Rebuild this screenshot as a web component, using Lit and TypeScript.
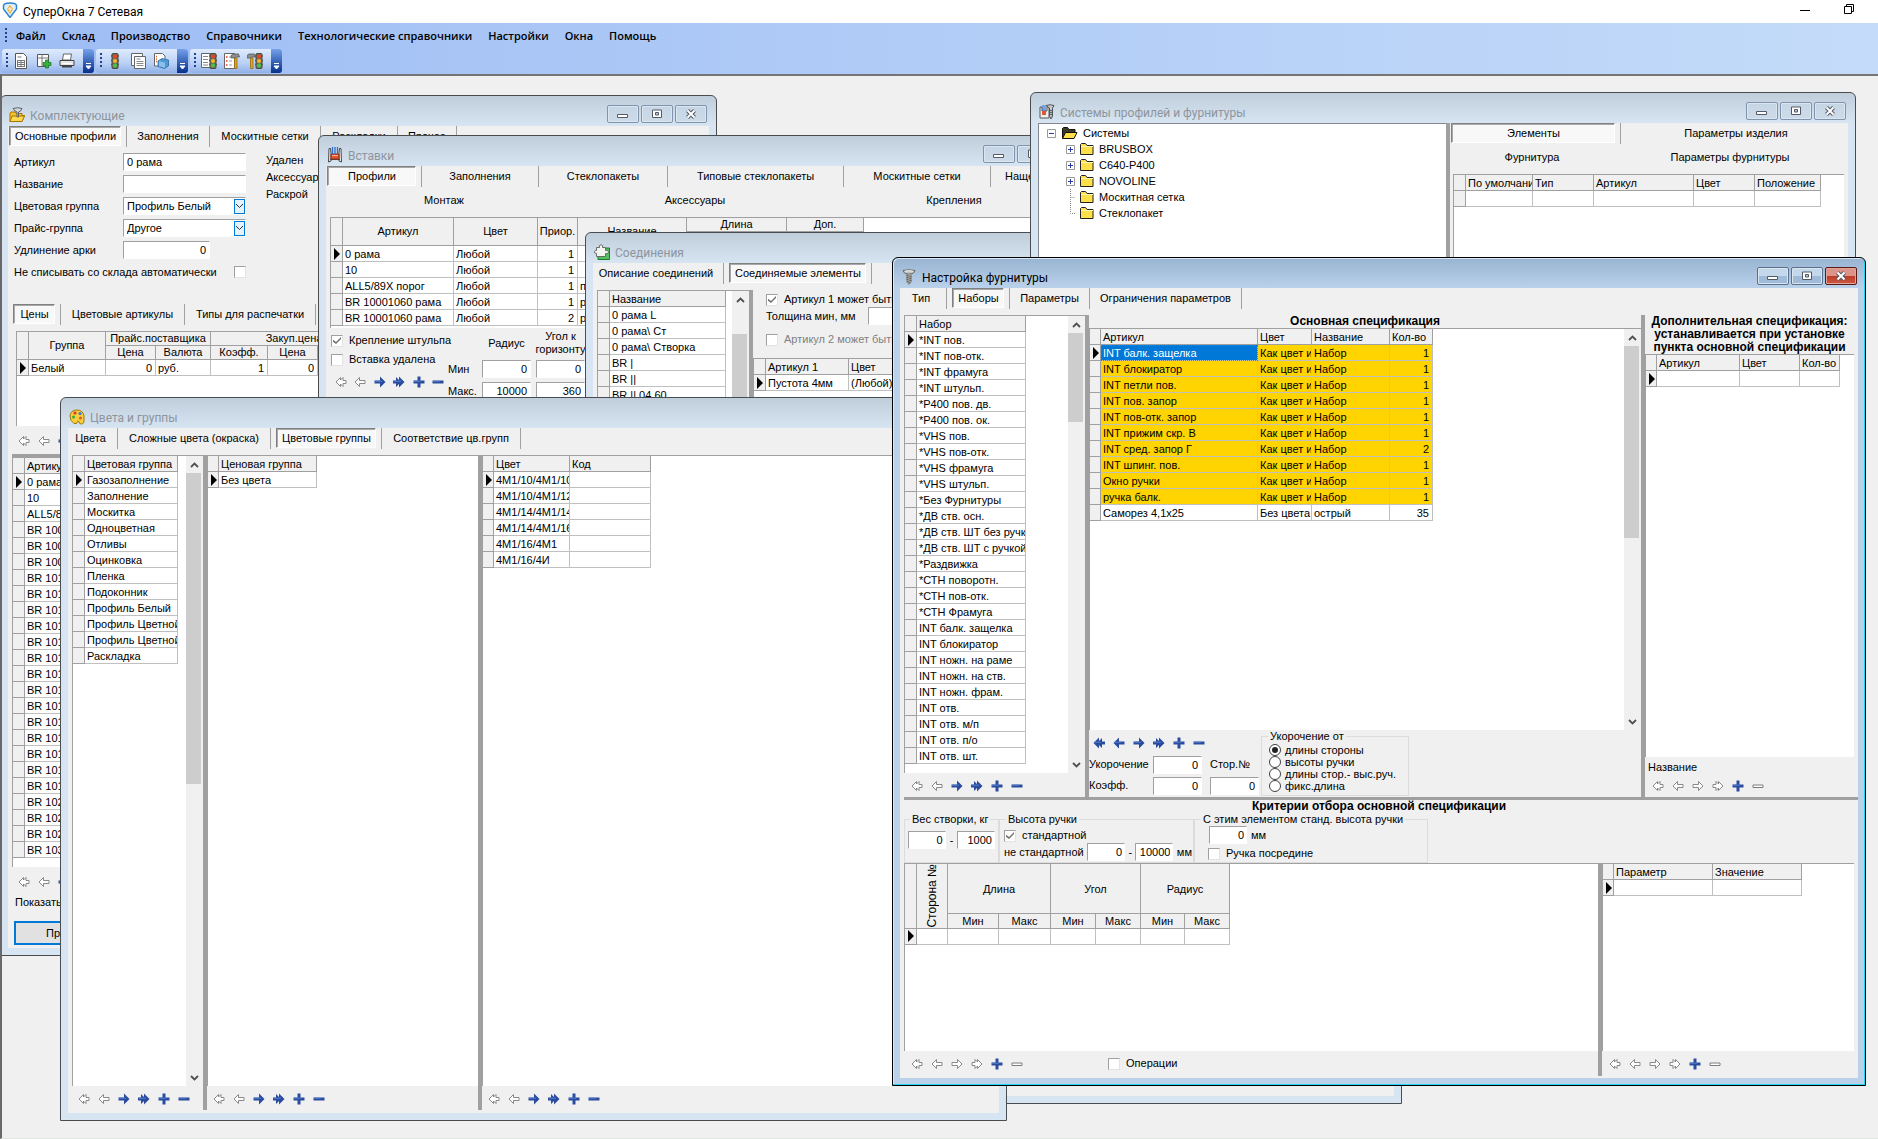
import { LitElement, html, svg, css, nothing } from "lit";
import type { TemplateResult } from "lit";
import { customElement } from "lit/decorators.js";
import { classMap } from "lit/directives/class-map.js";

type Cell = string | { t: string; cls?: string };
interface Column {
  w: number;
  t?: string;
  num?: boolean;
  center?: boolean;
}

/* ---------- glyphs ---------- */

const NAV: Record<string, string> = {
  first: "M5.5 1.5 1 6l4.500 4.500V8l2.500 2.500V7.500h3v-3H8v-3L5.500 4z",
  prev: "M5.500 1.500 1 6l4.500 4.500V7.500h5.500v-3H5.500z",
  next: "M6.500 1.500 11 6l-4.500 4.500V7.500H1v-3h5.500z",
  last: "M6.500 1.500 11 6l-4.500 4.500V8L4 10.500V7.500H1v-3h3v-3L6.500 4z",
  plus: "M4.500.5h3v4h4v3h-4v4h-3v-4h-4v-3h4z",
  minus: "M.5 4.500h11v3H.5z",
};
const NAV_SOLID: Record<string, string> = {
  ...NAV,
  first: "M6 .5.500 6 6 11.500V8l3 3V7.500h3v-3H9V1L6 4z",
  prev: "M6 .5.500 6 6 11.500v-4h5.500v-3H6z",
  next: "M6 .5 11.500 6 6 11.500v-4H.5v-3H6z",
  last: "M6 .5 11.500 6 6 11.500V8l-3 3V7.500H0v-3h3V1l3 3z",
};
const NAV_TITLES: Record<string, string> = {
  first: "Первая",
  prev: "Предыдущая",
  next: "Следующая",
  last: "Последняя",
  plus: "Добавить",
  minus: "Удалить",
};
const NAV_ORDER = ["first", "prev", "next", "last", "plus", "minus"];

/** Record navigator; `on` holds one flag per button, "1" = enabled. */
const navigator6 = (on: string) => html`
  <div class="nav">
    ${NAV_ORDER.map((k, i) => {
      const active = on[i] === "1";
      return html`<button class="navbtn" aria-label=${NAV_TITLES[k]} ?disabled=${!active}>
        <svg width="12" height="12" viewBox="0 0 12 12">
          ${active
            ? svg`<path d=${NAV_SOLID[k]} fill="#2b4c9e"/><path d="M1 5.200h7" stroke="#5580cf" stroke-width="1"/>`
            : k === "minus"
              ? svg`<path d="M1 5h10v2.500H1z" fill="#fff" stroke="#7d7d7d"/>`
              : svg`<path d=${NAV[k]} fill="#fff" stroke="#7d7d7d" stroke-width=".9"/>`}
        </svg>
      </button>`;
    })}
  </div>
`;

const pointer = svg`<path d="M0 0l5 5-5 5z" fill="#000"/>`;

const icons: Record<string, TemplateResult> = {
  app: html`<svg width="16" height="16" viewBox="0 0 16 16">
    <path d="M8 15.500 1.500 7V3.500Q2 1 8 1t6.500 2.500V7z" fill="#dff0fc" stroke="#2f86d0" stroke-width="1.500" />
    <path d="M8 3 11 7l-3 5L5 7z" fill="#f3a51c" /><path d="M8 5v5M6 7h4" stroke="#fff" />
  </svg>`,
  parts: html`<svg width="16" height="16" viewBox="0 0 16 16">
    <path d="M1 6.500V14.500h12l2.500-6H13V6.500H7L6 5H2z" fill="#f5c32c" stroke="#a87400" />
    <path d="M3 9h12.500L13 14.500H1z" fill="#ffd94f" stroke="#a87400" />
    <path d="M4 1.500Q9 0 13 1.500L11.500 4 9.500 5v5H8V5L6 4z" fill="#d4d8da" stroke="#5c6266" />
  </svg>`,
  insert: html`<svg width="16" height="16" viewBox="0 0 16 16">
    <path d="M2 1.500h1.500L4 6v8l-2.500 1zM14 1.500h-1.500L12 6v8l2.500 1zM3 12.500h10" fill="#eceff1" stroke="#4a4a4a" />
    <path d="M4 7h8v5H4z" fill="#e2562f" stroke="#8f2a10" />
    <path d="M5 8.500h6" stroke="#f6b49c" />
    <path d="M5.500 0v7M8 0v7M10.500 0v7" stroke="#2f6fd0" stroke-width="1.300" />
  </svg>`,
  joints: html`<svg width="16" height="16" viewBox="0 0 16 16">
    <path d="M4 4h11.500v11.500H4z" fill="#4fc25a" stroke="#1e7a2a" />
    <path d="M2.500 3.500h3Q4.500 1 7 .7 9.500 1 8.500 3.500h3v3q3-1 3 1.500t-3 1.500v3H2.500v-3Q.2 9.500.5 7.500q.5-1.500 2-1z" fill="#f1f3f0" stroke="#6a6a6a" />
  </svg>`,
  palette: html`<svg width="16" height="16" viewBox="0 0 16 16">
    <path d="M8 1Q14 1 15 7v6q-1 2.500-3 2-2 0-2.500-3-2 1-2 2.500H5Q1 12 1 7 1.500 1 8 1z" fill="#f8cf3a" stroke="#a0780a" />
    <circle cx="6" cy="4" r="1.600" fill="#d93a2b" /><circle cx="11" cy="4.500" r="1.600" fill="#3b78d8" />
    <circle cx="4.500" cy="8" r="1.500" fill="#3ba648" /><circle cx="11.500" cy="9" r="1.500" fill="#e2562f" />
  </svg>`,
  systems: html`<svg width="16" height="16" viewBox="0 0 16 16">
    <path d="M1 3h2v4h5V3h2v11H1z" fill="#eceff1" stroke="#555" /><path d="M3 7h4v4H3z" fill="#e2562f" />
    <path d="M4 1v6M6 1v6" stroke="#2f6fd0" />
    <path d="M7 1.500Q11 0 15 1.500L13.500 4v8l-1.500 3-1.500-3V4z" fill="#c9cdd0" stroke="#4e5458" />
    <path d="M10.500 6l3 1M10.500 8l3 1M10.500 10l3 1" stroke="#4e5458" />
  </svg>`,
  screw: html`<svg width="16" height="16" viewBox="0 0 16 16">
    <path d="M2 1.500Q8 0 14 1.500L12.500 4 10 5H6L3.500 4z" fill="#c2c4c5" stroke="#6d6a66" />
    <path d="M6 5h4v8l-2 2.500L6 13z" fill="#bfc1c2" stroke="#85827e" />
    <path d="M5.500 6.500l5 1M5.500 8.500l5 1M5.500 10.500l5 1M6 12.500l3.500 1" stroke="#5d5a56" /><path d="M4 2.200q4-1 8 0" stroke="#f4f4f4" fill="none" />
  </svg>`,
};

const sheet = svg`<path d="M2.500.5h8l3 3v12h-11z" fill="#fff" stroke="#555"/>`;
const light = (x: number) => svg`<g transform="translate(${x} 0)">
  <path d="M0 3h8M0 7.500h8M0 11.500h8" stroke="#6b5a3c" stroke-width="1.500"/>
  <rect x="1" y=".5" width="6" height="15" rx="1" fill="#6b6b55" stroke="#4e4e40"/>
  <circle cx="4" cy="3.500" r="2.100" fill="#e8432c"/><circle cx="4" cy="8" r="2.100" fill="#f5b62a"/><circle cx="4" cy="12.500" r="2.100" fill="#4cc04a"/></g>`;
const hammer = (x: number) => svg`<g transform="translate(${x} 0)">
  <path d="M0 5V2.500L2 1h5.500l1 3H5.500L3.500 5z" fill="#8b8f92" stroke="#55595c" stroke-width=".8"/><path d="M3.500 5h2.500v10.500H3.500z" fill="#e0a52c" stroke="#96690e" stroke-width=".8"/></g>`;
const tool = (body: unknown) => html`<svg width="16" height="16" viewBox="0 0 16 16">${body}</svg>`;

const TOOLS: { label: string; icon: TemplateResult }[][] = [
  [
    {
      label: "Новый заказ",
      icon: tool(svg`${sheet}<path d="M4.500 4h4M4.500 7.500h7M4.500 9.500h7M4.500 11.500h7M4.500 13.500h7M4.500 7v7M8 7v7M11.500 7v7" stroke="#777" fill="none"/>`),
    },
    {
      label: "Добавить",
      icon: tool(svg`<path d="M1.500 1.500h11v12h-11z" fill="#fff" stroke="#555"/><path d="M1.500 5h11M6 1.500v12" stroke="#777"/>
        <path d="M9.500 7h3v2.500H15v3h-2.500V15h-3v-2.500H7v-3h2.500z" fill="#35b13c" stroke="#1d7a26" stroke-width=".8"/>`),
    },
    {
      label: "Печать",
      icon: tool(svg`<path d="M4.500 1h8l-1 6h-8z" fill="#fff" stroke="#666"/><path d="M1 7.500h14v5H1z" fill="#e6e6e6" stroke="#444"/>
        <path d="M3 13.500h10" stroke="#444" stroke-width="2"/><path d="M3 10.500h10" stroke="#fff"/>`),
    },
  ],
  [
    { label: "Состояние", icon: tool(light(4)) },
    {
      label: "Документы",
      icon: tool(svg`<path d="M1.500.5h11v12h-11z" fill="#fff" stroke="#666"/><path d="M4.500 3.500h11v12h-11z" fill="#fff" stroke="#666"/>
        <path d="M6.500 6h4M6.500 8.500h7M6.500 10.500h7M6.500 12.500h7" stroke="#888"/>`),
    },
    {
      label: "Склад",
      icon: tool(svg`<path d="M1.500.5h8l2.500 2.500v10H1.500z" fill="#fff" stroke="#666"/><path d="M3 3.500h1M3 6h1M3 8.500h1" stroke="#d9622b" stroke-width="1.500"/>
        <path d="M5 8l4-2.500 6.500 1.500v6l-4 2.500L5 13.500z" fill="#4d9ad8" stroke="#2a6ba8" stroke-width=".8"/><path d="M7 8.500v5M9 9v5M11 9.500v5" stroke="#cfe6f8"/>`),
    },
  ],
  [
    {
      label: "Отчёты",
      icon: tool(svg`<path d="M.5.500h9v14h-9z" fill="#fff" stroke="#666"/><path d="M2 3.500h5M2 6.500h5M2 9.500h5M2 12h5" stroke="#888"/>${light(8)}`),
    },
    {
      label: "Работы",
      icon: tool(svg`<path d="M.5.500h10v15H.5z" fill="#fff" stroke="#666"/><path d="M2 4h1.500M2 8h1.500M2 12h1.500" stroke="#e03a26" stroke-width="1.500"/><path d="M5 4h3M5 8h3M5 12h3" stroke="#999"/>${hammer(7)}`),
    },
    { label: "Обработка", icon: tool(svg`${hammer(0)}${light(8)}`) },
  ],
];

/* ---------- data ---------- */

const MENU = ["Файл", "Склад", "Производство", "Справочники", "Технологические справочники", "Настройки", "Окна", "Помощь"];

const PROFILES = [
  "0 рама",
  "10",
  "ALL5/89X порог",
  ...Array(3).fill("BR 10001060"),
  ...Array(14).fill("BR 10101060"),
  ...Array(3).fill("BR 10201060"),
  "BR 10301060",
];
const COLOR_GROUPS = [
  "Газозаполнение", "Заполнение", "Москитка", "Одноцветная", "Отливы", "Оцинковка",
  "Пленка", "Подоконник", "Профиль Белый", "Профиль Цветной", "Профиль Цветной", "Раскладка",
];
const GLASS = ["4М1/10/4М1/10", "4М1/10/4М1/12", "4М1/14/4М1/14", "4М1/14/4М1/16", "4М1/16/4М1", "4М1/16/4И"];
const SETS = [
  "*INT пов.", "*INT пов-отк.", "*INT фрамуга", "*INT штульп.", "*P400 пов. дв.", "*P400 пов. ок.",
  "*VHS пов.", "*VHS пов-отк.", "*VHS фрамуга", "*VHS штульп.", "*Без Фурнитуры", "*ДВ ств. осн.",
  "*ДВ ств. ШТ без ручки", "*ДВ ств. ШТ с ручкой", "*Раздвижка", "*СТН поворотн.", "*СТН пов-отк.",
  "*СТН Фрамуга", "INT балк. защелка", "INT блокиратор", "INT ножн. на раме", "INT ножн. на ств.",
  "INT ножн. фрам.", "INT отв.", "INT отв. м/п", "INT отв. п/о", "INT отв. шт.",
];
const SPEC: [string, string][] = [
  ["INT балк. защелка", "1"], ["INT блокиратор", "1"], ["INT петли пов.", "1"], ["INT пов. запор", "1"],
  ["INT пов-отк. запор", "1"], ["INT прижим скр. В", "1"], ["INT сред. запор Г", "2"],
  ["INT шпинг. пов.", "1"], ["Окно ручки", "1"], ["ручка балк.", "1"],
];

/* ---------- template helpers ---------- */

const tabs = (items: [string, number][], active: number) => html`
  <div class="tabs" role="tablist">
    ${items.map(
      ([t, w], i) => html`<div class="tab" style="width:${w}px">
        <button role="tab" aria-selected=${i === active} class=${classMap({ tabbtn: true, on: i === active })}>${t}</button>
      </div>`
    )}
  </div>
`;

const links = (items: [string, number][]) => html`
  <div class="links">
    ${items.map(([t, w]) => html`<button class="linkbtn" style="width:${w}px">${t}</button>`)}
  </div>
`;

const colgroup = (cols: Column[], marker: number) => html`<colgroup>
  <col style="width:${marker}px" />
  ${cols.map((c) => html`<col style="width:${c.w}px" />`)}
</colgroup>`;

/** Data grid with a record-marker column; `head` overrides the plain header row. */
const grid = (
  cols: Column[],
  rows: Cell[][],
  opts: { marker?: number; current?: number; head?: TemplateResult } = {}
) => {
  const marker = opts.marker ?? 12;
  const current = opts.current ?? 0;
  const total = cols.reduce((s, c) => s + c.w, marker);
  return html`<table class="grid" style="width:${total}px">
    ${colgroup(cols, marker)}
    <thead>
      ${opts.head ?? html`<tr><th class="mk"></th>${cols.map((c) => html`<th>${c.t}</th>`)}</tr>`}
    </thead>
    <tbody>
      ${rows.map(
        (r, i) => html`<tr>
          <td class="mk">${i === current ? html`<svg width="6" height="12" viewBox="0 0 5 10">${pointer}</svg>` : nothing}</td>
          ${r.map((c, j) => {
            const cell = typeof c === "string" ? { t: c, cls: "" } : c;
            return html`<td class="${cell.cls ?? ""} ${cols[j].num ? "num" : ""}">${cell.t}</td>`;
          })}
        </tr>`
      )}
    </tbody>
  </table>`;
};

const chevron = (up: boolean) => html`<svg width="9" height="6" viewBox="0 0 9 6">
  <path d=${up ? "M1 5l3.500-3.500L8 5" : "M1 1l3.500 3.500L8 1"} fill="none" stroke="#505050" stroke-width="1.800" />
</svg>`;

const scrollbar = (thumb: number, offset = 0) => html`
  <div class="scroll" aria-hidden="true">
    <span class="arrow">${chevron(true)}</span>
    <span class="thumb" style="height:${thumb}px;margin-top:${offset}px"></span>
    <span class="arrow down">${chevron(false)}</span>
  </div>
`;

const check = (id: string, label: string, checked = false, disabled = false) => html`
  <span class="check">
    <input type="checkbox" id=${id} .checked=${checked} ?disabled=${disabled} /><label for=${id}>${label}</label>
  </span>
`;

const num = (id: string, value: string, cls = "", aria?: string) =>
  html`<input type="text" class="field num ${cls}" id=${id} .value=${value} aria-label=${aria ?? nothing} />`;

@customElement("app-root")
export class AppRoot extends LitElement {
  static styles = css`
    :host {
      display: flex;
      flex-direction: column;
      min-height: 100vh;
      background: #f0f0f0;
      font: 11px/13px "Liberation Sans", Arial, sans-serif;
      color: #000;
    }
    * { box-sizing: border-box; }
    button, input, select { font: inherit; color: inherit; margin: 0; }
    button { border: 0; background: none; padding: 0; }
    svg { display: block; flex: none; }

    .titlebar { display: flex; align-items: center; height: 23px; padding: 0 6px 4px 2px; background: #fff; }
    .apptitle { flex: 1; padding: 4px 0 0 5px; font: 12px/16px Roboto, "Open Sans", sans-serif; }
    .sysbtn { width: 45px; display: flex; justify-content: center; }
    .bars { background: linear-gradient(90deg, #9ebdf4, #c4dbf9); }
    .menubar { display: flex; align-items: center; height: 26px; padding-left: 5px; }
    .menubar .grip { margin-right: 1px; }
    .menuitem { padding: 0 8px; font: 600 11px/16px "Open Sans", "Noto Sans", sans-serif; }
    .grip { width: 2px; height: 16px; background: repeating-linear-gradient(#27408b 0 2px, transparent 2px 4px); }
    .toolbars { display: flex; gap: 2px; height: 25px; padding: 0 2px 1px; }
    .toolbar { display: flex; align-items: center; gap: 7px; padding-left: 4px; border-radius: 3px; background: linear-gradient(#dfebfd, #b9d0f5 60%, #8fb0e8); overflow: hidden; }
    .toolbar .grip { margin-right: -2px; }
    .more { align-self: stretch; width: 11px; margin-left: 1px; display: flex; align-items: flex-end; justify-content: center; padding-bottom: 3px; background: linear-gradient(#74a0ea, #06308a); }

    .mdi { position: relative; flex: 1; min-height: 1062px; overflow: hidden; border: solid #696969; border-width: 2px 0 0 2px; border-top-color: #757575; border-bottom: 1px solid #dfe6df; }
    .win { position: absolute; display: flex; flex-direction: column; padding: 0 7px 7px; border: 1px solid #4a4d50; border-radius: 6px 6px 0 0; background: linear-gradient(#c0cedc, #d7e4f2 30px); }
    .win.active { border-color: #000; background: linear-gradient(#98b4d2, #bad1ea 30px); box-shadow: inset -1px -1px 0 #20d8f4, inset 1px 1px 0 #d8e8f6; }
    .w1 { left: -2px; top: 19px; width: 717px; height: 861px; }
    .w2 { left: 316px; top: 59px; width: 775px; height: 700px; }
    .w3 { left: 583px; top: 156px; width: 817px; height: 872px; }
    .w4 { left: 58px; top: 321px; width: 947px; height: 724px; }
    .w5 { left: 1028px; top: 16px; width: 826px; height: 700px; }
    .w6 { left: 890px; top: 181px; width: 974px; height: 829px; }
    .caption { display: flex; height: 30px; padding: 9px 2px 0 1px; gap: 5px; }
    .caption h2 { flex: 1; margin: 0; font: 12px/22px Roboto, "Open Sans", sans-serif; color: #8d959c; white-space: nowrap; }
    .active .caption h2 { color: #000; }
    .active .caption { padding-right: 1px; }
    .capicon { padding-top: 2px; }
    .capbtns { display: flex; gap: 2px; height: 18px; }
    .capbtn { display: flex; align-items: center; justify-content: center; width: 32px; height: 18px; border: 1px solid #8194ae; border-radius: 2px; background: linear-gradient(#c6d5e4, #cddbe9); box-shadow: inset 0 0 0 1px #dbe6f1; }
    .active .capbtn { border-color: #5b708c; background: linear-gradient(#c4d8ec 50%, #9fbbd8 50%); }
    .active .capbtn.close { border-color: #5a1a16; background: linear-gradient(#dc9488 50%, #bb3a26 50%, #cf5a44); box-shadow: inset 0 0 0 1px #e0a69c; }
    .body { flex: 1; min-height: 0; display: flex; flex-direction: column; background: #f0f0f0; overflow: hidden; }

    .tabs { display: flex; flex: none; height: 21px; overflow: hidden; }
    .tab { flex: none; padding: 0 5px 1px; border-right: 1px solid #a0a0a0; }
    .tab:first-child { padding-left: 1px; }
    .tabbtn { width: 100%; height: 20px; white-space: nowrap; display: flex; justify-content: center; align-items: center; }
    .tabbtn.on { border: 1px solid; border-color: #808080 #fff #fff #808080; box-shadow: inset 1px 1px 0 #a8a8a8; background: #f8f8f8; padding: 1px 0 0 1px; }
    .links { display: flex; flex: none; height: 26px; margin-bottom: 4px; overflow: hidden; }
    .linkbtn { flex: none; text-align: center; }

    .pane { display: flex; align-items: flex-start; background: #fff; border: solid #a0a0a0; border-width: 1px 0 0 1px; overflow: hidden; min-height: 0; }
    .grow { flex: 1; min-width: 0; min-height: 0; }
    .row { display: flex; }
    .col { display: flex; flex-direction: column; }
    .vsplit { flex: none; width: 4px; background: #a0a0a0; }
    .hsplit { flex: none; height: 3px; background: #a0a0a0; }

    .grid { table-layout: fixed; border-collapse: separate; border-spacing: 0; flex: none; }
    .grid th, .grid td { height: 16px; padding: 1px 1px 0 2px; border: solid #c0c0c0; border-width: 0 1px 1px 0; font-weight: 400; text-align: left; white-space: nowrap; overflow: hidden; line-height: 14px; }
    .grid th { background: #f0f0f0; border-color: #a0a0a0; }
    .grid .mk { background: #f0f0f0; border-color: #a0a0a0; padding: 0 0 0 3px; }
    .grid .num { text-align: right; padding-right: 3px; }
    .grid .mid th { text-align: center; padding: 0; }
    .grid .gold { background: #ffd400; }
    .grid .sel { background: #0078d7; color: #fff; outline: 1px dotted #c06000; outline-offset: -1px; }
    .grid .h13 th { height: 14px; line-height: 13px; }
    .grid .h28 th { height: 28px; }
    .grid .h14 th { height: 14px; line-height: 13px; }
    .grid .h50 th { height: 50px; }
    .turned { display: inline-block; writing-mode: vertical-rl; text-orientation: sideways; transform: rotate(180deg); font-size: 12px; line-height: 14px; vertical-align: middle; }

    .scroll { align-self: stretch; flex: none; width: 17px; margin-left: auto; display: flex; flex-direction: column; background: #f0f0f0; }
    .arrow { height: 17px; display: flex; align-items: center; justify-content: center; }
    .arrow.down { margin-top: auto; }
    .thumb { background: #cdcdcd; margin-right: 2px; flex: none; }

    .nav { display: flex; align-items: center; flex: none; height: 24px; padding: 1px 0 0 2px; }
    .navbtn { width: 20px; height: 20px; display: flex; align-items: center; justify-content: center; }

    .field { width: 49px; height: 18px; padding: 0 3px; background: #fff; border: 1px solid; border-color: #a0a0a0 #fff #fff #a0a0a0; border-radius: 0; outline: 0; min-width: 0; }
    .field.num { text-align: right; }
    .field.s { width: 38px; padding: 0 2px; }
    .check { display: flex; align-items: center; gap: 6px; white-space: nowrap; }
    input[type="checkbox"] { appearance: none; width: 12px; height: 12px; flex: none; background: #fff; border: 1px solid; border-color: #a0a0a0 #e3e3e3 #e3e3e3 #a0a0a0; display: grid; place-items: center; }
    input[type="checkbox"]:checked::before { content: ""; width: 8px; height: 7px; background: #707070; clip-path: polygon(0 40%, 38% 72%, 100% 0, 100% 28%, 38% 100%, 0 68%); }
    input[type="checkbox"]:disabled + label { color: #808080; }
    input[type="radio"] { appearance: none; width: 12px; height: 12px; flex: none; border: 1px solid #404040; border-radius: 50%; background: #fff; display: grid; place-items: center; }
    input[type="radio"]:checked::before { content: ""; width: 6px; height: 6px; border-radius: 50%; background: #222; }
    fieldset { margin: 0; padding: 0 4px; border: 1px solid #dcdcdc; min-width: 0; }
    legend { padding: 0 2px; margin-left: 2px; line-height: 13px; white-space: nowrap; }
    h3 { margin: 0; font: 700 12px/13px "Liberation Sans", Arial, sans-serif; text-align: center; white-space: nowrap; }

    .form { display: grid; grid-template-columns: 109px 123px; grid-auto-rows: 22px; align-items: center; padding: 4px 0 0 6px; }
    .form .field { width: 100%; }
    .form .field.num { width: 87px; }
    .combo { display: grid; }
    .combo > * { grid-area: 1 / 1; }
    .combo select { appearance: none; }
    .combo span { justify-self: end; align-self: center; margin-right: 1px; width: 11px; height: 15px; border: 1px solid #0078d7; background: #e5f1fb; display: flex; align-items: center; justify-content: center; pointer-events: none; }
    .nowrite { grid-column: 1 / 3; display: flex; justify-content: space-between; align-items: center; }
    .flags { padding: 4px 0 0 20px; }
    .flags p { margin: 0 0 4px; }
    .flags p:first-child { padding-top: 3px; }
    .w1 .tabs + .row { flex: none; }
    .prices { margin: 6px 0 0 8px; height: 95px; flex: none; }
    .subtabs { padding: 21px 0 0 4px; flex: none; }
    .parts { margin-left: 4px; }
    .parts-nav { padding: 2px 0 2px 4px; flex: none; }
    .show { padding: 1px 0 0 7px; height: 17px; flex: none; }
    .price { flex: none; align-self: flex-start; width: 96px; height: 24px; margin: 9px 0 3px 6px; border: 2px solid #0078d7; background: #e1e1e1; }

    .inserts { margin-left: 4px; height: 111px; flex: none; }
    .insert-left { width: 122px; padding: 6px 0 0 5px; gap: 6px; }
    .insert-left .nav { padding: 0; height: 20px; }
    .limits { display: grid; grid-template-columns: 29px 49px 49px; column-gap: 5px; grid-template-rows: 30px 22px 22px; align-items: center; }
    .limits .head { text-align: center; white-space: nowrap; display: flex; justify-content: center; }

    .joint-area { margin: 6px 0 0 4px; padding-bottom: 30px; }
    .joint-left { width: 152px; }
    .joint-form { padding: 3px 0 12px 13px; flex: none; }
    .joint-form .thick { display: flex; align-items: center; gap: 12px; height: 20px; }
    .joint-form .check:last-child { margin-top: 7px; }

    .colors { margin: 6px 0 3px 4px; }
    .c1 { width: 131px; }
    .c2 { width: 271px; }

    .tree { width: 408px; padding: 1px 0 0 8px; margin: 0; list-style: none; border: 1px solid #828790; border-right: 0; background: #fff; }
    .tree li { display: flex; align-items: center; height: 16px; gap: 5px; }
    .tree .lvl { padding-left: 19px; gap: 4px; }
    .sysgrid { margin: 0 4px 0 3px; }

    .sets { margin: 6px 4px 0; flex: none; height: 482px; }
    .s1 { width: 181px; }
    .s1 .nav, .foot .nav { padding-left: 3px; }
    .midleft .nav { padding-left: 0; }
    .s3 { width: 209px; }
    .midform { height: 67px; flex: none; }
    .midleft { width: 172px; flex: none; }
    .mf { display: grid; grid-template-columns: 64px 49px 49px; grid-auto-rows: 21px; align-items: center; white-space: nowrap; }
    .mf > :nth-child(3n) { margin-left: 8px; width: 49px; }
    .radios { width: 148px; height: 66px; padding: 1px 0 0 7px; }
    .radios legend { margin-left: -1px; }
    .radios .check { height: 12px; gap: 4px; }
    .name { height: 20px; padding: 4px 0 0 3px; flex: none; }
    .s3 .nav { height: 20px; padding: 0 0 2px 3px; }
    .criteria { margin: 0 4px; flex: none; height: 50px; }
    .criteria fieldset { white-space: nowrap; }
    .weight { width: 95px; }
    .height { width: 195px; }
    .std { width: 234px; }
    .line { display: flex; align-items: center; gap: 4px; }
    .criteria .weight { padding: 0 3px; }
    .weight .line { padding-top: 5px; }
    .height { padding: 0 1px 0 4px; }
    .height .line { justify-content: space-between; gap: 1px; }
    .height .check { height: 17px; padding-top: 2px; }
    .std .line { padding-left: 10px; }
    .std .check { padding-left: 9px; padding-top: 3px; }
    .critgrid { margin: 0 4px 2px; }
    .cr { width: 252px; }
    .ops { flex: 1; display: flex; padding-left: 81px; }
    .foot { display: flex; align-items: center; height: 25px; flex: none; }
  `;

  private win(cls: string, icon: string, title: string, body: TemplateResult) {
    return html`<section class="win ${cls}" aria-label=${title}>
      <header class="caption">
        <span class="capicon">${icons[icon]}</span>
        <h2>${title}</h2>
        <div class="capbtns">
          <button class="capbtn" aria-label="Свернуть">
            <svg width="12" height="10" viewBox="0 0 12 10"><path d="M.5 5.500h10v3H.5z" fill="#fff" stroke="#535a66" /></svg>
          </button>
          <button class="capbtn" aria-label="Развернуть">
            <svg width="12" height="10" viewBox="0 0 12 10"><path d="M1.500 1h9v7.500h-9z" fill="#fff" stroke="#535a66" /><path d="M4.500 3.500h3v2.500h-3z" fill="#b8cadc" stroke="#535a66" /></svg>
          </button>
          <button class="capbtn close" aria-label="Закрыть">
            <svg width="12" height="10" viewBox="0 0 12 10"><path d="M2.500 1.500l7 7M9.500 1.500l-7 7" stroke="#535a66" stroke-width="4" /><path d="M2.500 1.500l7 7M9.500 1.500l-7 7" stroke="#fff" stroke-width="2" /></svg>
          </button>
        </div>
      </header>
      <div class="body">${body}</div>
    </section>`;
  }

  private combo(id: string, value: string) {
    return html`<div class="combo">
      <select class="field" id=${id}><option>${value}</option></select>
      <span><svg width="9" height="6" viewBox="0 0 9 6"><path d="M1 1l3.500 3.500L8 1" fill="none" stroke="#333" /></svg></span>
    </div>`;
  }

  private components() {
    return this.win("w1", "parts", "Комплектующие", html`
      ${tabs([["Основные профили", 119], ["Заполнения", 83], ["Москитные сетки", 111], ["Раскладки", 77], ["Прочее", 59]], 0)}
      <div class="row">
        <div class="form">
          <label for="art">Артикул</label><input type="text" class="field" id="art" .value=${"0 рама"} />
          <label for="nm">Название</label><input type="text" class="field" id="nm" />
          <label for="cg">Цветовая группа</label>${this.combo("cg", "Профиль Белый")}
          <label for="pg">Прайс-группа</label>${this.combo("pg", "Другое")}
          <label for="arc">Удлинение арки</label>${num("arc", "0")}
          <div class="nowrite"><label for="nw">Не списывать со склада автоматически</label><input type="checkbox" id="nw" /></div>
        </div>
        <div class="flags"><p>Удален</p><p>Аксессуары</p><p>Раскрой</p></div>
      </div>
      <div class="subtabs">${tabs([["Цены", 49], ["Цветовые артикулы", 124], ["Типы для распечатки", 131]], 0)}</div>
      <div class="pane prices">
        ${grid(
          [{ w: 77 }, { w: 50, num: true }, { w: 55 }, { w: 57, num: true }, { w: 50, num: true }, { w: 60 }],
          [["Белый", "0", "руб.", "1", "0", "руб."]],
          {
            head: html`<tr class="mid h13"><th class="mk" rowspan="2"></th><th rowspan="2">Группа</th><th colspan="2">Прайс.поставщика</th><th colspan="3">Закуп.цена</th></tr>
              <tr class="mid h14"><th>Цена</th><th>Валюта</th><th>Коэфф.</th><th>Цена</th><th>Валюта</th></tr>`,
          }
        )}
      </div>
      <div class="parts-nav">${navigator6("001111")}</div>
      <div class="hsplit parts"></div>
      <div class="pane grow parts">${grid([{ w: 150, t: "Артикул" }, { w: 200, t: "Название" }], PROFILES.map((p) => [p, ""]), { marker: 12 })}</div>
      <div class="parts-nav">${navigator6("001111")}</div>
      <div class="show">Показать</div>
      <button class="price">Прайс</button>
    `);
  }

  private inserts() {
    return this.win("w2", "insert", "Вставки", html`
      ${tabs([["Профили", 96], ["Заполнения", 117], ["Стеклопакеты", 129], ["Типовые стеклопакеты", 176], ["Москитные сетки", 147], ["Нащельники", 93]], 0)}
      ${links([["Монтаж", 236], ["Аксессуары", 266], ["Крепления", 252]])}
      <div class="pane inserts">
        ${grid(
          [{ w: 111 }, { w: 84 }, { w: 40, num: true }, { w: 109 }, { w: 100 }, { w: 77 }],
          [
            ["0 рама", "Любой", "1", "", "", ""],
            ["10", "Любой", "1", "", "", ""],
            ["ALL5/89X порог", "Любой", "1", "порог", "", ""],
            ["BR 10001060 рама", "Любой", "1", "рама", "", ""],
            ["BR 10001060 рама", "Любой", "2", "рама", "", ""],
          ],
          {
            head: html`<tr class="mid h14"><th class="mk" rowspan="2"></th><th rowspan="2">Артикул</th><th rowspan="2">Цвет</th><th rowspan="2">Приор.</th><th rowspan="2">Название</th><th>Длина</th><th>Доп.</th></tr>
              <tr class="mid h14"><th></th><th></th></tr>`,
          }
        )}
      </div>
      <div class="row">
        <div class="col insert-left">${check("sh", "Крепление штульпа", true)}${check("vd", "Вставка удалена")}${navigator6("001111")}</div>
        <div class="limits">
          <span></span><span class="head">Радиус</span><span class="head">Угол к<br />горизонту</span>
          <label for="rmin">Мин</label>${num("rmin", "0")}${num("amin", "0", "", "Угол мин")}
          <label for="rmax">Макс.</label>${num("rmax", "10000")}${num("amax", "360", "", "Угол макс")}
        </div>
      </div>
    `);
  }

  private joints() {
    return this.win("w3", "joints", "Соединения", html`
      ${tabs([["Описание соединений", 131], ["Соединяемые элементы", 148]], 1)}
      <div class="row grow joint-area">
        <div class="pane joint-left">
          ${grid([{ w: 116, t: "Название" }], ["0 рама L", "0 рама\\ Ст", "0 рама\\ Створка", "BR |", "BR ||", "BR || 04.60"].map((t) => [t]), { current: -1 })}
          ${scrollbar(200, 26)}
        </div>
        <div class="vsplit"></div>
        <div class="col grow">
          <div class="joint-form">
            ${check("a1", "Артикул 1 может быть", true)}
            <div class="thick"><label for="th">Толщина мин, мм</label>${num("th", "")}</div>
            ${check("a2", "Артикул 2 может быть", false, true)}
          </div>
          <div class="pane grow">${grid([{ w: 83, t: "Артикул 1" }, { w: 60, t: "Цвет" }], [["Пустота 4мм", "(Любой)"]])}</div>
        </div>
      </div>
    `);
  }

  private systems() {
    const folder = html`<svg width="16" height="14" viewBox="0 0 16 14"><path d="M1.500 12.500v-10l1-1h4l1.500 2h6v9z" fill="#ffe04a" stroke="#222" /><path d="M2 4.500h12" stroke="#fff6b8" /></svg>`;
    const box = (plus: boolean) => html`<svg width="9" height="9" viewBox="0 0 9 9"><path d="M.5.5h8v8h-8z" fill="#fff" stroke="#9a9a9a" /><path d=${plus ? "M2 4.500h5M4.500 2v5" : "M2 4.500h5"} stroke="#2a3f9f" /></svg>`;
    const stem = (end: boolean) => html`<svg width="9" height="16" viewBox="0 0 9 16"><path d=${end ? "M4.500 0v8.500H9" : "M4.500 0v16M4.500 8.500H9"} fill="none" stroke="#888" stroke-dasharray="1 1" /></svg>`;
    return this.win("w5", "systems", "Системы профилей и фурнитуры", html`
      <div class="row grow">
        <ul class="tree">
          <li>${box(false)}<svg width="17" height="14" viewBox="0 0 17 14"><path d="M1.500 12.500v-10l1-1h4l1.500 2h6v3" fill="#3a3a2a" stroke="#111" /><path d="M1.500 12.500l3-6h11.500l-3 6z" fill="#ffe04a" stroke="#111" /></svg>Системы</li>
          ${[["BRUSBOX", true], ["C640-P400", true], ["NOVOLINE", true], ["Москитная сетка", false], ["Стеклопакет", false]].map(
            ([t, p], i) => html`<li class="lvl">${p ? box(true) : stem(i === 4)}${folder}${t}</li>`
          )}
        </ul>
        <div class="vsplit"></div>
        <div class="col grow">
          ${tabs([["Элементы", 171], ["Параметры изделия", 231]], 0)}
          ${links([["Фурнитура", 164], ["Параметры фурнитуры", 232]])}
          <div class="pane grow sysgrid">
            ${grid([{ w: 67, t: "По умолчанию" }, { w: 61, t: "Тип" }, { w: 100, t: "Артикул" }, { w: 61, t: "Цвет" }, { w: 66, t: "Положение" }], [["", "", "", "", ""]], { current: -1 })}
          </div>
        </div>
      </div>
    `);
  }

  private colors() {
    return this.win("w4", "palette", "Цвета и группы", html`
      ${tabs([["Цвета", 50], ["Сложные цвета (окраска)", 153], ["Цветовые группы", 111], ["Соответствие цв.групп", 139]], 2)}
      <div class="row grow colors">
        <div class="col c1">
          <div class="pane grow">${grid([{ w: 93, t: "Цветовая группа" }], COLOR_GROUPS.map((t) => [t]))}${scrollbar(311)}</div>
          ${navigator6("001111")}
        </div>
        <div class="vsplit"></div>
        <div class="col c2">
          <div class="pane grow">${grid([{ w: 98, t: "Ценовая группа" }], [["Без цвета"]], { marker: 11 })}</div>
          ${navigator6("001111")}
        </div>
        <div class="vsplit"></div>
        <div class="col grow">
          <div class="pane grow">${grid([{ w: 76, t: "Цвет" }, { w: 81, t: "Код" }], GLASS.map((t) => [t, ""]), { marker: 11 })}</div>
          ${navigator6("001111")}
        </div>
      </div>
    `);
  }

  private fittings() {
    const spec: Cell[][] = SPEC.map(([a, n], i) => [
      { t: a, cls: i === 0 ? "sel" : "gold" },
      { t: "Как цвет изделия", cls: "gold" },
      { t: "Набор", cls: "gold" },
      { t: n, cls: "gold" },
    ]);
    spec.push(["Саморез 4,1x25", "Без цвета", "острый", "35"]);
    return this.win("w6 active", "screw", "Настройка фурнитуры", html`
      ${tabs([["Тип", 47], ["Наборы", 63], ["Параметры", 80], ["Ограничения параметров", 152]], 1)}
      <div class="row sets">
        <div class="col s1">
          <div class="pane grow">${grid([{ w: 109, t: "Набор" }], SETS.map((t) => [t]))}${scrollbar(89)}</div>
          ${navigator6("001111")}
        </div>
        <div class="vsplit"></div>
        <div class="col grow">
          <h3>Основная спецификация</h3>
          <div class="pane grow">
            ${grid([{ w: 157, t: "Артикул" }, { w: 54, t: "Цвет" }, { w: 78, t: "Название" }, { w: 43, t: "Кол-во", num: true }], spec, { marker: 11 })}
            ${scrollbar(192)}
          </div>
          <div class="row midform">
            <div class="midleft">
              ${navigator6("111111")}
              <div class="mf">
                <label for="sh1">Укорочение</label>${num("sh1", "0")}<label for="side">Стор.№</label>
                <label for="kf">Коэфф.</label>${num("kf", "0")}${num("side", "0")}
              </div>
            </div>
            <fieldset class="radios">
              <legend>Укорочение от</legend>
              ${["длины стороны", "высоты ручки", "длины стор.- выс.руч.", "фикс.длина"].map(
                (t, i) => html`<span class="check"><input type="radio" name="short" id="r${i}" .checked=${i === 0} /><label for="r${i}">${t}</label></span>`
              )}
            </fieldset>
          </div>
        </div>
        <div class="vsplit"></div>
        <div class="col s3">
          <h3>Дополнительная спецификация:<br />устанавливается при установке<br />пункта основной спецификации</h3>
          <div class="pane grow">${grid([{ w: 83, t: "Артикул" }, { w: 60, t: "Цвет" }, { w: 40, t: "Кол-во" }], [["", "", ""]], { marker: 11 })}</div>
          <div class="name">Название</div>
          ${navigator6("000010")}
        </div>
      </div>
      <div class="hsplit parts"></div>
      <h3>Критерии отбора основной спецификации</h3>
      <div class="row criteria">
        <fieldset class="weight">
          <legend>Вес створки, кг</legend>
          <div class="line">${num("wmin", "0", "s", "Вес от")}-${num("wmax", "1000", "s", "Вес до")}</div>
        </fieldset>
        <fieldset class="height">
          <legend>Высота ручки</legend>
          ${check("std", "стандартной", true)}
          <div class="line"><label for="hmin">не стандартной</label>${num("hmin", "0", "s")}-${num("hmax", "10000", "s", "Высота до")}мм</div>
        </fieldset>
        <fieldset class="std">
          <legend>С этим элементом станд. высота ручки</legend>
          <div class="line">${num("hh", "0", "s", "Высота ручки")}<label for="hh">мм</label></div>
          ${check("mid", "Ручка посредине")}
        </fieldset>
      </div>
      <div class="row grow critgrid">
        <div class="col grow">
          <div class="pane grow">
            ${grid(
              [{ w: 31 }, { w: 51 }, { w: 52 }, { w: 45 }, { w: 45 }, { w: 44 }, { w: 45 }],
              [["", "", "", "", "", "", ""]],
              {
                head: html`<tr class="mid h50"><th class="mk" rowspan="2"></th><th rowspan="2"><span class="turned">Сторона №</span></th><th colspan="2">Длина</th><th colspan="2">Угол</th><th colspan="2">Радиус</th></tr>
                  <tr class="mid h14">${[0, 1, 2].map(() => html`<th>Мин</th><th>Макс</th>`)}</tr>`,
              }
            )}
          </div>
          <div class="foot">${navigator6("000010")}<span class="ops">${check("op", "Операции")}</span></div>
        </div>
        <div class="vsplit"></div>
        <div class="col cr">
          <div class="pane grow">${grid([{ w: 99, t: "Параметр" }, { w: 89, t: "Значение" }], [["", ""]], { marker: 11 })}</div>
          <div class="foot">${navigator6("000010")}</div>
        </div>
      </div>
    `);
  }

  render() {
    return html`
      <header class="titlebar">
        ${icons.app}<span class="apptitle">СуперОкна 7 Сетевая</span>
        <button class="sysbtn" aria-label="Свернуть"><svg width="10" height="10" viewBox="0 0 10 10"><path d="M0 5.500h10" stroke="#000" /></svg></button>
        <button class="sysbtn" aria-label="Восстановить"><svg width="11" height="11" viewBox="0 0 11 11"><path d="M.5 2.500h7v7h-7zM2.500 2.500V.5h7v7h-2" fill="none" stroke="#000" /></svg></button>
      </header>
      <div class="bars">
        <nav class="menubar"><span class="grip"></span>${MENU.map((m) => html`<button class="menuitem">${m}</button>`)}</nav>
        <div class="toolbars">
          ${TOOLS.map(
            (g) => html`<div class="toolbar" role="toolbar">
              <span class="grip"></span>
              ${g.map((t) => html`<button aria-label=${t.label}>${t.icon}</button>`)}
              <button class="more" aria-label="Ещё"><svg width="7" height="7" viewBox="0 0 7 7"><path d="M1 .5h5M1 3l2.500 3L6 3z" stroke="#fff" fill="#fff" /></svg></button>
            </div>`
          )}
        </div>
      </div>
      <main class="mdi">
        ${this.components()} ${this.inserts()} ${this.joints()} ${this.systems()} ${this.colors()} ${this.fittings()}
      </main>
    `;
  }
}
